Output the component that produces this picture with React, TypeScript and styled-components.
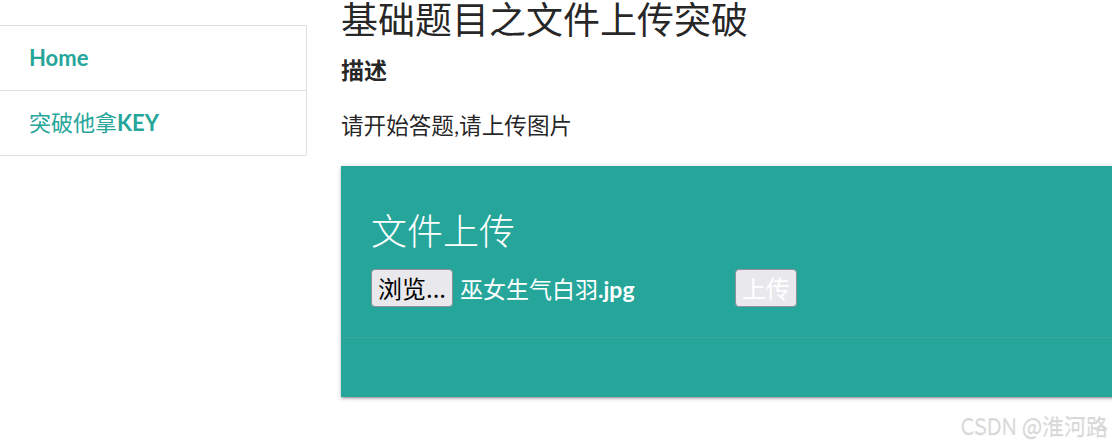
import React, { FC } from "react";
import styled, { createGlobalStyle } from "styled-components";

const TEAL = "#26a69a";

const GlobalStyle = createGlobalStyle`
  html, body {
    margin: 0;
    padding: 0;
    background: #fff;
    overflow: hidden;
  }

  body {
    color: rgba(0, 0, 0, 0.87);
    font-family: "Lato", "Noto Sans CJK SC", sans-serif;
    font-size: 22px;
  }
`;

const Page = styled.div`
  display: flex;
  align-items: flex-start;
  width: 1112px;
  height: 447px;
  position: relative;
`;

const Sidebar = styled.ul`
  border: 1px solid #e0e0e0;
  border-left: none;
  border-radius: 0 2px 2px 0;
  flex: 0 0 306px;
  list-style: none;
  margin: 25px 0 0;
  padding: 0;
`;

const NavItem = styled.li<{ $last?: boolean }>`
  border-bottom: ${({ $last }) => ($last ? "none" : "1px solid #e0e0e0")};
  color: ${TEAL};
  height: 64px;
  line-height: 64px;
  padding-left: 29px;
`;

const Latin = styled.span`
  font-weight: 700;
`;

const Main = styled.main`
  flex: 0 0 800px;
  margin-left: 34px;
`;

const Title = styled.h1`
  font-size: 37px;
  font-weight: 400;
  line-height: 40px;
  margin: 0;
`;

const Heading = styled.h4`
  font-size: 23px;
  font-weight: 700;
  line-height: 30px;
  margin: 15px 0 0;
`;

const Prompt = styled.p`
  font-size: 22.6px;
  line-height: 30px;
  margin: 26px 0 0;
`;

const Card = styled.section`
  background: ${TEAL};
  box-shadow: 0 2px 2px 0 rgba(0, 0, 0, 0.14), 0 3px 1px -2px rgba(0, 0, 0, 0.12),
    0 1px 5px 0 rgba(0, 0, 0, 0.2);
  color: #fff;
  margin-top: 25px;
`;

const CardContent = styled.div`
  padding: 43px 30px 30px;
`;

const CardTitle = styled.div`
  font-size: 36px;
  font-weight: 300;
  line-height: 44px;
`;

const UploadRow = styled.form`
  align-items: center;
  display: flex;
  margin-top: 16px;
`;

const FileField = styled.div`
  align-items: center;
  display: flex;
  gap: 7px;
  width: 364px;
`;

const NativeButton = styled.button<{ $muted?: boolean }>`
  background: #e9e9ed;
  border: 1px solid #8f8f9d;
  border-radius: 4px;
  box-sizing: border-box;
  color: ${({ $muted }) => ($muted ? "#fff" : "#000")};
  font-family: "Noto Sans CJK SC", sans-serif;
  font-size: 24px;
  height: 38px;
  line-height: 36px;
  padding: 0 6px;
`;

const FileName = styled.span`
  font-size: 23px;
  white-space: nowrap;
`;

const CardAction = styled.div`
  border-top: 1px solid rgba(160, 160, 160, 0.2);
  height: 59px;
`;

const Watermark = styled.div`
  bottom: 7px;
  color: #dadada;
  font-family: "Noto Sans CJK SC", sans-serif;
  font-size: 22px;
  font-weight: 300;
  position: absolute;
  right: 4px;
  text-shadow: 0 1px 1px rgba(0, 0, 0, 0.2);
`;

const App: FC = () => (
  <>
    <GlobalStyle />
    <Page>
      <Sidebar>
        <NavItem>
          <Latin>Home</Latin>
        </NavItem>
        <NavItem $last>
          突破他拿<Latin>KEY</Latin>
        </NavItem>
      </Sidebar>
      <Main>
        <Title>基础题目之文件上传突破</Title>
        <Heading>描述</Heading>
        <Prompt>请开始答题,请上传图片</Prompt>
        <Card>
          <CardContent>
            <CardTitle>文件上传</CardTitle>
            <UploadRow onSubmit={(e) => e.preventDefault()}>
              <FileField>
                <NativeButton type="button">浏览...</NativeButton>
                <FileName>
                  巫女生气白羽<Latin>.jpg</Latin>
                </FileName>
              </FileField>
              <NativeButton type="submit" $muted>
                上传
              </NativeButton>
            </UploadRow>
          </CardContent>
          <CardAction />
        </Card>
      </Main>
      <Watermark>CSDN @淮河路</Watermark>
    </Page>
  </>
);

export default App;
